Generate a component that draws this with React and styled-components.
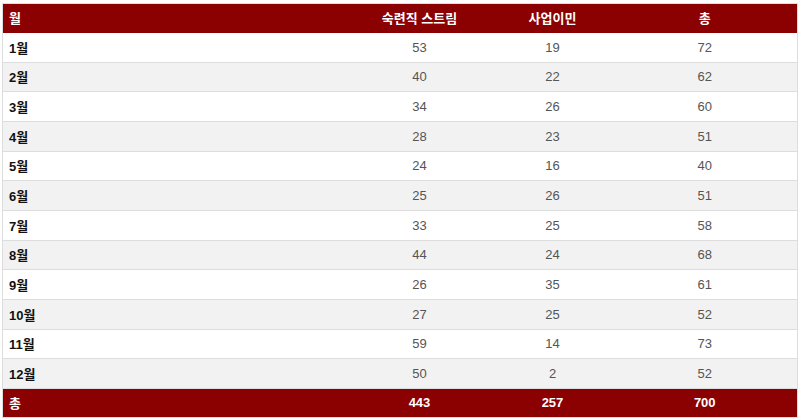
import React from "react";
import styled, { createGlobalStyle } from "styled-components";

const Global = createGlobalStyle`
  html, body { margin: 0; padding: 0; background: #ffffff; }
  body { font-family: "Liberation Sans", "Noto Sans CJK KR", Arial, sans-serif; }
`;

const Page = styled.div`
  padding: 3px 3px 0 2px;
`;

const Table = styled.table`
  width: 795px;
  border-collapse: collapse;
  table-layout: fixed;
  border: 1px solid #dddddd;
  font-size: 13px;
`;

const HeadCell = styled.th`
  background: #8b0000;
  color: #ffffff;
  font-weight: bold;
  height: 29px;
  padding: 0 6px;
  box-sizing: border-box;
  line-height: 15px;
  text-align: ${(p) => (p.$left ? "left" : "center")};
`;

const Row = styled.tr`
  background: ${(p) => (p.$alt ? "#f2f2f2" : "#ffffff")};
  border-bottom: 1px solid #dddddd;
`;

const LabelCell = styled.td`
  height: 29.67px;
  box-sizing: border-box;
  padding: 0 6px;
  font-weight: bold;
  color: #111111;
  text-align: left;
`;

const NumCell = styled.td`
  padding: 0 6px;
  color: #555555;
  text-align: center;
`;

const FootCell = styled.td`
  background: #8b0000;
  color: #ffffff;
  font-weight: bold;
  height: 29px;
  box-sizing: border-box;
  padding: 0 6px;
  text-align: ${(p) => (p.$left ? "left" : "center")};
`;

const data = [
  ["1월", 53, 19, 72],
  ["2월", 40, 22, 62],
  ["3월", 34, 26, 60],
  ["4월", 28, 23, 51],
  ["5월", 24, 16, 40],
  ["6월", 25, 26, 51],
  ["7월", 33, 25, 58],
  ["8월", 44, 24, 68],
  ["9월", 26, 35, 61],
  ["10월", 27, 25, 52],
  ["11월", 59, 14, 73],
  ["12월", 50, 2, 52],
];

export default function App() {
  return (
    <>
      <Global />
      <Page>
        <Table>
          <colgroup>
            <col style={{ width: 344 }} />
            <col style={{ width: 146 }} />
            <col style={{ width: 120 }} />
            <col style={{ width: 185 }} />
          </colgroup>
          <thead>
            <tr>
              <HeadCell $left>월</HeadCell>
              <HeadCell>숙련직 스트림</HeadCell>
              <HeadCell>사업이민</HeadCell>
              <HeadCell>총</HeadCell>
            </tr>
          </thead>
          <tbody>
            {data.map((r, i) => (
              <Row key={r[0]} $alt={i % 2 === 1}>
                <LabelCell>{r[0]}</LabelCell>
                <NumCell>{r[1]}</NumCell>
                <NumCell>{r[2]}</NumCell>
                <NumCell>{r[3]}</NumCell>
              </Row>
            ))}
          </tbody>
          <tfoot>
            <tr>
              <FootCell $left>총</FootCell>
              <FootCell>443</FootCell>
              <FootCell>257</FootCell>
              <FootCell>700</FootCell>
            </tr>
          </tfoot>
        </Table>
      </Page>
    </>
  );
}
